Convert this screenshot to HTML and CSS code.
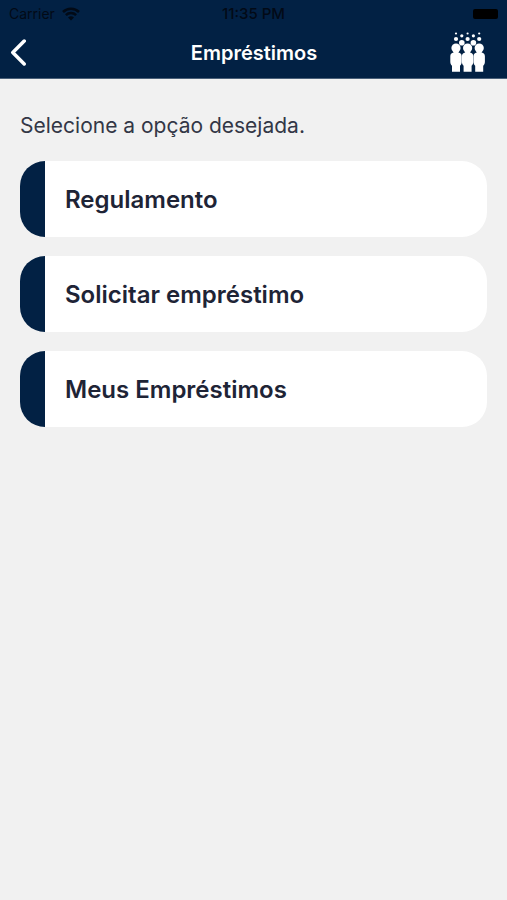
FILE: index.html
```html
<!DOCTYPE html>
<html lang="pt-BR">
<head>
<meta charset="utf-8">
<meta name="viewport" content="width=device-width, initial-scale=1">
<title>Empréstimos</title>
<link rel="stylesheet" href="styles.css">
</head>
<body>
<header class="top">
  <div class="status">
    <div class="carrier">
      <span>Carrier</span>
      <svg class="wifi" viewBox="0 0 18 14" aria-hidden="true">
        <path d="M1 5a11.3 11.3 0 0 1 16 0M3.9 8.2a7.2 7.2 0 0 1 10.2 0" fill="none" stroke="currentColor" stroke-width="2.5"/>
        <path d="M9 13.6 6 10.6a4.3 4.3 0 0 1 6 0z" fill="currentColor"/>
      </svg>
    </div>
    <time class="clock">11:35 PM</time>
    <span class="battery"></span>
  </div>
  <nav class="bar">
    <button class="back" type="button" aria-label="Voltar">
      <svg viewBox="0 0 16 26" aria-hidden="true"><path d="M13.5 2 2.5 13l11 11" fill="none" stroke="currentColor" stroke-width="3.4" stroke-linecap="round" stroke-linejoin="round"/></svg>
    </button>
    <h1 class="title">Empréstimos</h1>
    <svg class="logo" viewBox="0 0 36 42" aria-hidden="true">
      <defs>
        <g id="person">
          <circle cx="6" cy="16" r="4.6"/>
          <path d="M3.5 19h5v1.600c2 .3 3.200 1.600 3.200 3.600v5.600c0 1.700-.6 3.200-1.700 4v6H2v-6C.9 33 .3 31.500.3 29.800v-5.600c0-2 1.200-3.300 3.200-3.600z"/>
        </g>
      </defs>
      <g fill="currentColor">
        <use href="#person" x="0"/><use href="#person" x="11.6"/><use href="#person" x="23.2"/>
        <circle cx="11.8" cy="10.7" r="2.8"/><circle cx="23.4" cy="10.7" r="2.8"/>
        <circle cx="6" cy="7" r="2.1"/><circle cx="17.6" cy="7" r="2.1"/><circle cx="29.2" cy="7" r="2.1"/>
        <circle cx="11.8" cy="3.8" r="1.6"/><circle cx="23.4" cy="3.8" r="1.6"/>
        <circle cx="6" cy="1.5" r="1.1"/><circle cx="17.6" cy="1.5" r="1.1"/><circle cx="29.2" cy="1.5" r="1.1"/>
      </g>
    </svg>
  </nav>
</header>
<main class="content">
  <p class="prompt">Selecione a opção desejada.</p>
  <div class="options">
    <button class="option" type="button">Regulamento</button>
    <button class="option" type="button">Solicitar empréstimo</button>
    <button class="option" type="button">Meus Empréstimos</button>
  </div>
</main>
</body>
</html>
```

FILE: styles.css
```css
* { box-sizing: border-box; }
body {
  margin: 0;
  min-height: 100vh;
  background: #f1f1f1;
  color: #1e2436;
  font-family: Inter, "Liberation Sans", sans-serif;
}
.top { background: #022144; border-bottom: 1px solid #4a6079; }
.status {
  display: grid;
  grid-template-columns: 1fr auto 1fr;
  align-items: center;
  height: 27px;
  padding: 0 9px;
  color: #020a16;
  font-size: 14px;
}
.carrier { display: flex; align-items: center; gap: 7px; }
.wifi { width: 18px; height: 14px; }
.clock { font-size: 15px; font-weight: 500; }
.battery {
  justify-self: end;
  width: 25px;
  height: 10px;
  border-radius: 2px;
  background: #000;
}
.bar {
  display: grid;
  grid-template-columns: 1fr auto 1fr;
  align-items: center;
  height: 51px;
  padding: 0 21px 0 10px;
  color: #fff;
}
.back {
  justify-self: start;
  display: flex;
  padding: 0;
  border: 0;
  background: none;
  color: inherit;
  cursor: pointer;
}
.back svg { width: 17px; height: 27px; }
.title { margin: 0 0 0 12px; font-size: 20px; line-height: 24px; font-weight: 600; }
.logo { justify-self: end; width: 36px; height: 42px; }
.content { padding: 33px 20px; }
.prompt { margin: 0 0 21px; font-size: 21px; line-height: 28px; color: #333746; }
.options { display: grid; gap: 19px; }
.option {
  min-height: 76px;
  padding: 2px 20px 0;
  border: 0;
  border-left: 25px solid #022144;
  border-radius: 25px;
  background: #fff;
  color: inherit;
  font: 600 24px/30px Inter, "Liberation Sans", sans-serif;
  text-align: left;
  cursor: pointer;
}
```
